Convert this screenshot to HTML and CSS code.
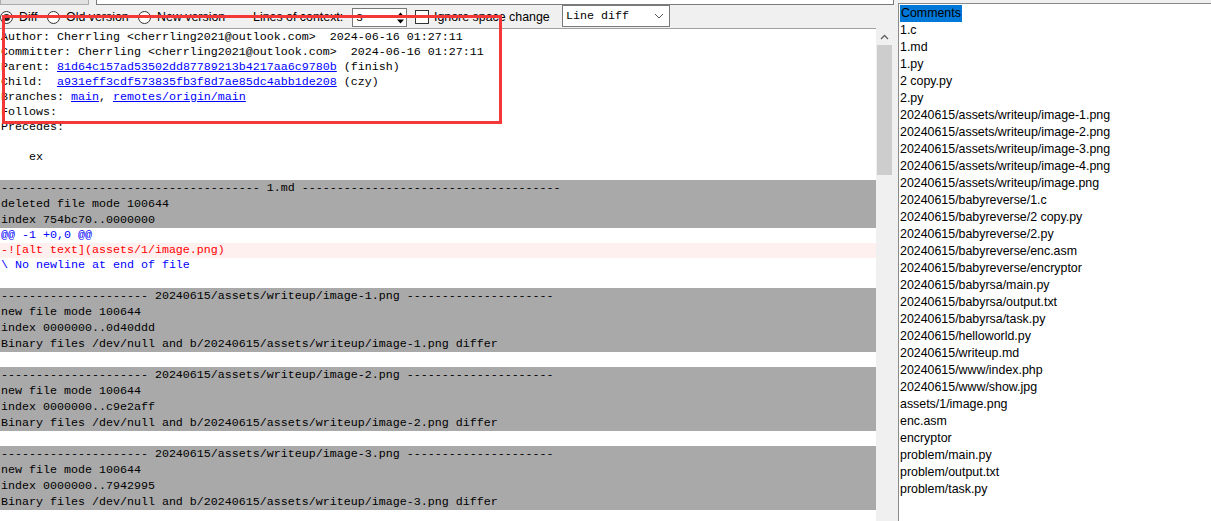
FILE: index.html
```html
<!DOCTYPE html>
<html lang="en">
<head>
  <meta charset="UTF-8">
  <title>gitk - diff view</title>
  <link rel="stylesheet" href="styles.css">
</head>
<body>
  <div class="window">
    <div class="left">
      <div class="top-strip">
        <div class="strip-button"></div>
        <div class="strip-entry"></div>
      </div>

      <div class="toolbar">
        <label class="opt opt-diff"><span class="radio on"></span>Diff</label>
        <label class="opt opt-old"><span class="radio"></span>Old version</label>
        <label class="opt opt-new"><span class="radio"></span>New version</label>
        <span class="ctx-label">Lines of context:</span>
        <div class="spinbox">
          <span class="spin-value">3</span>
          <svg class="spin-arrows" width="9" height="16" viewBox="0 0 9 16">
            <path d="M1 6.5 L4.5 2.5 L8 6.5 Z" fill="#000"/>
            <path d="M1 9.5 L4.5 13.5 L8 9.5 Z" fill="#000"/>
          </svg>
        </div>
        <label class="opt opt-ignore"><span class="checkbox"></span>Ignore space change</label>
        <div class="combo">
          <span class="combo-value">Line diff</span>
          <svg width="10" height="6" viewBox="0 0 10 6">
            <path d="M1 1 L5 5 L9 1" fill="none" stroke="#555" stroke-width="1"/>
          </svg>
        </div>
      </div>

      <div class="text-pane">
        <div class="ctext">
          <div class="ln">Author: Cherrling &lt;cherrling2021@outlook.com&gt;  2024-06-16 01:27:11</div>
          <div class="ln">Committer: Cherrling &lt;cherrling2021@outlook.com&gt;  2024-06-16 01:27:11</div>
          <div class="ln">Parent: <a class="link">81d64c157ad53502dd87789213b4217aa6c9780b</a> (finish)</div>
          <div class="ln">Child:  <a class="link">a931eff3cdf573835fb3f8d7ae85dc4abb1de208</a> (czy)</div>
          <div class="ln">Branches: <a class="link">main</a>, <a class="link">remotes/origin/main</a></div>
          <div class="ln">Follows:</div>
          <div class="ln">Precedes:</div>
          <div class="ln"> </div>
          <div class="ln">    ex</div>
          <div class="ln"> </div>

          <div class="ln sep">------------------------------------- 1.md -------------------------------------</div>
          <div class="ln sep">deleted file mode 100644</div>
          <div class="ln sep">index 754bc70..0000000</div>
          <div class="ln hunk">@@ -1 +0,0 @@</div>
          <div class="ln del">-![alt text](assets/1/image.png)</div>
          <div class="ln hunk">\ No newline at end of file</div>
          <div class="ln"> </div>

          <div class="ln sep">--------------------- 20240615/assets/writeup/image-1.png ---------------------</div>
          <div class="ln sep">new file mode 100644</div>
          <div class="ln sep">index 0000000..0d40ddd</div>
          <div class="ln sep">Binary files /dev/null and b/20240615/assets/writeup/image-1.png differ</div>
          <div class="ln"> </div>

          <div class="ln sep">--------------------- 20240615/assets/writeup/image-2.png ---------------------</div>
          <div class="ln sep">new file mode 100644</div>
          <div class="ln sep">index 0000000..c9e2aff</div>
          <div class="ln sep">Binary files /dev/null and b/20240615/assets/writeup/image-2.png differ</div>
          <div class="ln"> </div>

          <div class="ln sep">--------------------- 20240615/assets/writeup/image-3.png ---------------------</div>
          <div class="ln sep">new file mode 100644</div>
          <div class="ln sep">index 0000000..7942995</div>
          <div class="ln sep">Binary files /dev/null and b/20240615/assets/writeup/image-3.png differ</div>
          <div class="ln"> </div>
        </div>

        <div class="scrollbar">
          <div class="scroll-up">
            <svg width="9" height="6" viewBox="0 0 9 6">
              <path d="M1 5 L4.5 1.5 L8 5" fill="none" stroke="#606060" stroke-width="1.4"/>
            </svg>
          </div>
          <div class="scroll-thumb"></div>
        </div>
      </div>
    </div>

    <div class="filelist">
      <div class="item"><span class="sel">Comments</span></div>
      <div class="item">1.c</div>
      <div class="item">1.md</div>
      <div class="item">1.py</div>
      <div class="item">2 copy.py</div>
      <div class="item">2.py</div>
      <div class="item">20240615/assets/writeup/image-1.png</div>
      <div class="item">20240615/assets/writeup/image-2.png</div>
      <div class="item">20240615/assets/writeup/image-3.png</div>
      <div class="item">20240615/assets/writeup/image-4.png</div>
      <div class="item">20240615/assets/writeup/image.png</div>
      <div class="item">20240615/babyreverse/1.c</div>
      <div class="item">20240615/babyreverse/2 copy.py</div>
      <div class="item">20240615/babyreverse/2.py</div>
      <div class="item">20240615/babyreverse/enc.asm</div>
      <div class="item">20240615/babyreverse/encryptor</div>
      <div class="item">20240615/babyrsa/main.py</div>
      <div class="item">20240615/babyrsa/output.txt</div>
      <div class="item">20240615/babyrsa/task.py</div>
      <div class="item">20240615/helloworld.py</div>
      <div class="item">20240615/writeup.md</div>
      <div class="item">20240615/www/index.php</div>
      <div class="item">20240615/www/show.jpg</div>
      <div class="item">assets/1/image.png</div>
      <div class="item">enc.asm</div>
      <div class="item">encryptor</div>
      <div class="item">problem/main.py</div>
      <div class="item">problem/output.txt</div>
      <div class="item">problem/task.py</div>
    </div>
  </div>

  <!-- red annotation box drawn over the commit header -->
  <div class="mark"></div>
</body>
</html>
```

FILE: styles.css
```css
body {
  margin: 0;
  width: 1211px;
  height: 521px;
  overflow: hidden;
  background: #f0f0f0;
  font-family: 'Liberation Sans', Arial, sans-serif;
  font-size: 12.4px;
  color: #000;
}

.window {
  display: flex;
  height: 521px;
}

.left {
  width: 898px;
  display: flex;
  flex-direction: column;
}

/* bits of the pane above, cut off by the screenshot */
.top-strip {
  display: flex;
  height: 5px;
}

.strip-button {
  width: 87px;
  height: 4px;
  background: #e1e1e1;
  border: 1px solid #adadad;
  border-top: none;
}

.strip-entry {
  margin-left: 7px;
  width: 796px;
  height: 4px;
  background: #fff;
  border: 1px solid #7a7a7a;
  border-top: none;
}

.toolbar {
  height: 23px;
  display: flex;
  align-items: center;
  padding-top: 1px;
  box-sizing: border-box;
}

.opt {
  display: flex;
  align-items: center;
  gap: 6px;
  white-space: nowrap;
}

.opt-diff { width: 47px; }
.opt-old { width: 91px; }
.opt-new { width: 115px; }
.opt-ignore { width: 147px; gap: 5px; }

.radio {
  width: 11px;
  height: 11px;
  border: 1px solid #333;
  border-radius: 50%;
  background: #fff;
  margin-top: 1px;
  display: flex;
  align-items: center;
  justify-content: center;
}

.radio.on::after {
  content: '';
  width: 7px;
  height: 7px;
  border-radius: 50%;
  background: #222;
}

.ctx-label {
  width: 99px;
  white-space: nowrap;
}

.spinbox {
  width: 53px;
  height: 17px;
  margin-top: 1px;
  margin-right: 8px;
  background: #fff;
  border: 1px solid #7a7a7a;
  display: flex;
  align-items: center;
  justify-content: space-between;
}

.spin-value {
  font-family: 'Liberation Mono', 'Courier New', monospace;
  font-size: 11.67px;
  padding-left: 3px;
}

.spin-arrows {
  margin-right: 1px;
}

.checkbox {
  width: 12px;
  height: 12px;
  border: 1px solid #333;
  background: #fff;
}

.combo {
  width: 98px;
  height: 20px;
  padding: 0 5px 0 3px;
  background: #fff;
  border: 1px solid #7a7a7a;
  display: flex;
  align-items: center;
  justify-content: space-between;
  margin-top: -2px;
}

.combo-value {
  font-family: 'Liberation Mono', 'Courier New', monospace;
  font-size: 11.67px;
}

.text-pane {
  flex: 1;
  display: flex;
  min-height: 0;
}

.ctext {
  width: 876px;
  background: #fff;
  border-top: 1px solid #a0a0a0;
  padding-top: 1px;
  overflow: hidden;
  font-family: 'Liberation Mono', 'Courier New', monospace;
  font-size: 11.67px;
}

.ln {
  white-space: pre;
  line-height: 15px;
  height: 15px;
  padding-left: 1px;
}

.ln.sep {
  background: #a9a9a9;
  line-height: 16px;
  height: 16px;
}

.ln.hunk {
  color: #0000ff;
}

.ln.del {
  color: #ff0000;
  background: #fff0f0;
}

.link {
  color: #0000ff;
  text-decoration: underline;
}

.scrollbar {
  width: 15px;
  margin-left: 1px;
}

.scroll-up {
  height: 17px;
  display: flex;
  align-items: center;
  justify-content: center;
}

.scroll-thumb {
  height: 130px;
  background: #cdcdcd;
}

.filelist {
  flex: 1;
  margin-top: 3px;
  padding-top: 1px;
  background: #fff;
  border-top: 1px solid #8a8a8a;
  border-left: 1px solid #8a8a8a;
}

.item {
  line-height: 17px;
  height: 17px;
  padding-left: 1px;
  white-space: nowrap;
}

.sel {
  display: inline-block;
  background: #0078d7;
  padding: 0 1px;
}

.mark {
  position: absolute;
  left: 2px;
  top: 15px;
  width: 494px;
  height: 103px;
  border: 3px solid #f43838;
}
```
